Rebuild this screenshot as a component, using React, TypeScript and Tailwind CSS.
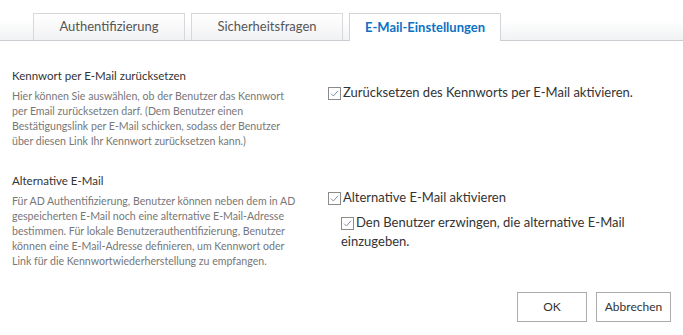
import React, { useState } from 'react';

const font = { fontFamily: 'Lato, "Open Sans", sans-serif' };

interface CheckProps {
  checked: boolean;
  onToggle: () => void;
  children: React.ReactNode;
}

const CheckBox: React.FC<{ checked: boolean }> = ({ checked }) => (
  <span className="inline-flex w-[13px] h-[13px] shrink-0 items-center justify-center border border-[#8a8a8a] bg-white align-[-2px] mr-[2px]">
    {checked && (
      <svg width="11" height="11" viewBox="0 0 11 11">
        <path d="M2 5.6 L4.4 8 L9 2.8" fill="none" stroke="#7f93a8" strokeWidth="1" />
      </svg>
    )}
  </span>
);

const CheckRow: React.FC<CheckProps> = ({ checked, onToggle, children }) => (
  <label className="block cursor-pointer text-[13px] leading-[19px] text-[#333]" onClick={onToggle}>
    <CheckBox checked={checked} />
    {children}
  </label>
);

const tabs = ['Authentifizierung', 'Sicherheitsfragen', 'E-Mail-Einstellungen'];

const Section: React.FC<{ title: string; lines: string[]; children: React.ReactNode }> = ({ title, lines, children }) => (
  <div className="grid grid-cols-[316px_1fr]">
    <div>
      <h3 className="text-[11.5px] leading-[16px] text-[#333]">{title}</h3>
      <p className="mt-[5px] text-[10.6px] leading-[15px] text-[#777] whitespace-nowrap">
        {lines.map((l, i) => (
          <span key={i} className="block">
            {l}
          </span>
        ))}
      </p>
    </div>
    <div className="pt-[15px]">{children}</div>
  </div>
);

const App: React.FC = () => {
  const [activeTab, setActiveTab] = useState(2);
  const [resetByMail, setResetByMail] = useState(true);
  const [altMail, setAltMail] = useState(true);
  const [forceAltMail, setForceAltMail] = useState(true);

  return (
    <div className="w-[683px] h-[335px] bg-white overflow-hidden" style={font}>
      {/* Tabs */}
      <div className="flex items-end gap-[6px] h-[41px] pl-[33px] border-b border-[#c8ccd0] bg-gradient-to-b from-white from-50% to-[#f1f2f4]">
        {tabs.map((tab, i) =>
          i === activeTab ? (
            <button
              key={tab}
              onClick={() => setActiveTab(i)}
              className="w-[152px] h-[28px] -mb-px border border-b-0 border-[#d2d5d8] bg-white text-[13px] font-bold text-[#0b72c4]"
            >
              {tab}
            </button>
          ) : (
            <button
              key={tab}
              onClick={() => setActiveTab(i)}
              className="w-[152px] h-[27px] border border-b-0 border-[#d6d9dc] bg-gradient-to-b from-white to-[#f1f2f4] text-[13px] text-[#555]"
            >
              {tab}
            </button>
          )
        )}
      </div>

      <div className="px-3 pt-[27px]">
        <Section
          title="Kennwort per E-Mail zurücksetzen"
          lines={[
            'Hier können Sie auswählen, ob der Benutzer das Kennwort',
            'per Email zurücksetzen darf. (Dem Benutzer einen',
            'Bestätigungslink per E-Mail schicken, sodass der Benutzer',
            'über diesen Link Ihr Kennwort zurücksetzen kann.)',
          ]}
        >
          <CheckRow checked={resetByMail} onToggle={() => setResetByMail(!resetByMail)}>
            Zurücksetzen des Kennworts per E-Mail aktivieren.
          </CheckRow>
        </Section>

        <div className="mt-[24px]">
          <Section
            title="Alternative E-Mail"
            lines={[
              'Für AD Authentifizierung, Benutzer können neben dem in AD',
              'gespeicherten E-Mail noch eine alternative E-Mail-Adresse',
              'bestimmen. Für lokale Benutzerauthentifizierung, Benutzer',
              'können eine E-Mail-Adresse definieren, um Kennwort oder',
              'Link für die Kennwortwiederherstellung zu empfangen.',
            ]}
          >
            <CheckRow checked={altMail} onToggle={() => setAltMail(!altMail)}>
              Alternative E-Mail aktivieren
            </CheckRow>
            <div className="mt-[6px] pl-[13px]">
              <CheckRow checked={forceAltMail} onToggle={() => setForceAltMail(!forceAltMail)}>
                Den Benutzer erzwingen, die alternative E-Mail
                <br />
                einzugeben.
              </CheckRow>
            </div>
          </Section>
        </div>

        {/* Buttons */}
        <div className="flex justify-end gap-[9px] mt-[23px]">
          <button className="w-[70px] h-[30px] border border-[#ababab] bg-white text-[12px] text-[#333]">OK</button>
          <button className="w-[75px] h-[30px] border border-[#ababab] bg-white text-[12px] text-[#333]">Abbrechen</button>
        </div>
      </div>
    </div>
  );
};

export default App;
